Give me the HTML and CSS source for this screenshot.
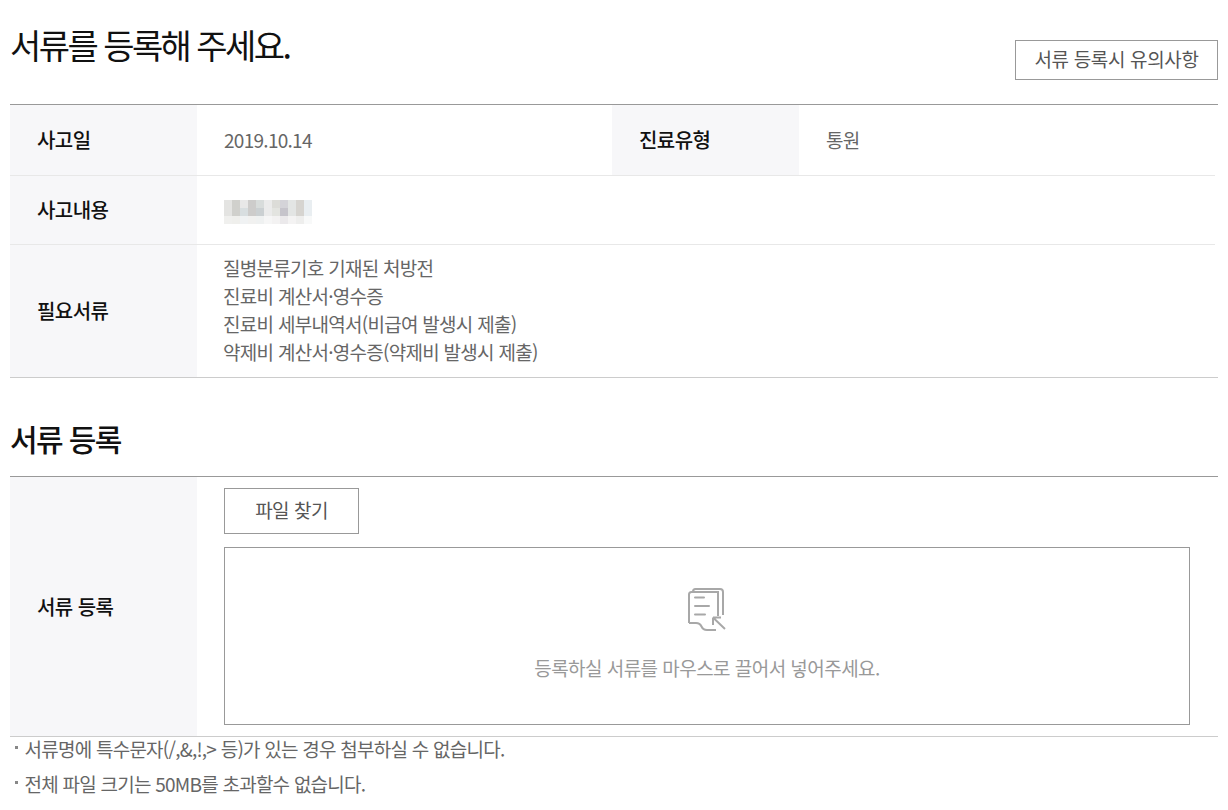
FILE: index.html
```html
<!DOCTYPE html>
<html lang="ko">
<head>
<meta charset="utf-8">
<title>서류 등록</title>
<link rel="stylesheet" href="styles.css">
</head>
<body>
<main class="page">
  <header class="head">
    <h1 class="title">서류를 등록해 주세요.</h1>
    <button class="btn btn-notice" type="button">서류 등록시 유의사항</button>
  </header>
  <section class="info">
    <div class="row row-date">
      <div class="label">사고일</div>
      <div class="value">2019.10.14</div>
      <div class="label">진료유형</div>
      <div class="value">통원</div>
    </div>
    <div class="row row-content">
      <div class="label">사고내용</div>
      <div class="value">
        <svg class="mosaic" width="88" height="24" viewBox="0 0 11 3" shape-rendering="crispEdges" aria-hidden="true">
          <rect x="0" y="0" width="1" height="2" fill="#e4e4e2"/><rect x="1" y="0" width="1" height="2" fill="#d0d0cc"/><rect x="2" y="0" width="1" height="1" fill="#e8e8e8"/><rect x="2" y="1" width="1" height="1" fill="#d8dee0"/><rect x="3" y="0" width="1" height="2" fill="#cdcccb"/><rect x="4" y="0" width="1" height="1" fill="#d8dcdb"/><rect x="4" y="1" width="1" height="1" fill="#cbd0d2"/><rect x="5" y="0" width="1" height="2" fill="#ebebeb"/><rect x="6" y="0" width="1" height="1" fill="#dcdcd8"/><rect x="6" y="1" width="1" height="1" fill="#e3e4e0"/><rect x="7" y="0" width="1" height="1" fill="#d4d3d8"/><rect x="7" y="1" width="1" height="1" fill="#c6c4cb"/><rect x="8" y="0" width="1" height="2" fill="#e3e5e4"/><rect x="9" y="0" width="1" height="2" fill="#d6d4d0"/><rect x="10" y="0" width="1" height="2" fill="#e9eef1"/>
          <rect x="0" y="2" width="1" height="1" fill="#f0f0ee"/><rect x="1" y="2" width="1" height="1" fill="#efefec"/><rect x="2" y="2" width="1" height="1" fill="#f0f2f3"/><rect x="3" y="2" width="1" height="1" fill="#f1f1f0"/><rect x="4" y="2" width="1" height="1" fill="#eff1f1"/><rect x="5" y="2" width="1" height="1" fill="#f6f6f6"/><rect x="6" y="2" width="1" height="1" fill="#f3f2f2"/><rect x="7" y="2" width="1" height="1" fill="#ebe9eb"/><rect x="8" y="2" width="1" height="1" fill="#f4f3f3"/><rect x="9" y="2" width="1" height="1" fill="#eeeeed"/><rect x="10" y="2" width="1" height="1" fill="#f8f9f9"/>
        </svg>
      </div>
    </div>
    <div class="row row-docs">
      <div class="label">필요서류</div>
      <ul class="value docs">
        <li>질병분류기호 기재된 처방전</li>
        <li>진료비 계산서·영수증</li>
        <li>진료비 세부내역서(비급여 발생시 제출)</li>
        <li>약제비 계산서·영수증(약제비 발생시 제출)</li>
      </ul>
    </div>
  </section>
  <h2 class="subtitle">서류 등록</h2>
  <section class="upload">
    <div class="label label-upload">서류 등록</div>
    <div class="upload-body">
      <button class="btn btn-file" type="button">파일 찾기</button>
      <div class="dropzone">
        <svg class="drop-icon" width="40" height="46" viewBox="0 0 40 46" fill="none" stroke="#a8a8a8" stroke-width="2" aria-hidden="true">
          <path d="M2 35V6.5Q2 4 4.500 4H31V28"/>
          <path d="M6 4V3.500Q6 1 8.500 1H33Q36 1 36 4V27"/>
          <path d="M8 9.500H17M8 18H22M8 26.500H18" stroke-linecap="round"/>
          <path d="M2 35H9Q13 35 14.500 38.500Q16 42 20 42H29"/>
          <path d="M26 29.500H34M26 29.500V37M26.500 30L38 41"/>
        </svg>
        <p class="drop-text">등록하실 서류를 마우스로 끌어서 넣어주세요.</p>
      </div>
    </div>
  </section>
  <ul class="notes">
    <li>서류명에 특수문자(/,&amp;,!,&gt; 등)가 있는 경우 첨부하실 수 없습니다.</li>
    <li>전체 파일 크기는 50MB를 초과할수 없습니다.</li>
  </ul>
</main>
</body>
</html>
```
FILE: styles.css
```css
* { box-sizing: border-box; }
html, body { margin: 0; padding: 0; background: #fff; }
body {
  font-family: "Noto Sans CJK KR", "Noto Sans", sans-serif;
  color: #666;
  overflow: hidden;
}
.page { padding: 0 10px; height: 810px; }
.head {
  display: flex;
  justify-content: space-between;
  align-items: flex-end;
  height: 105px;
  border-bottom: 1px solid #999;
  padding-bottom: 24px;
}
.title {
  margin: 0;
  align-self: flex-start;
  padding-top: 20px;
  font-size: 34px;
  line-height: 50px;
  font-weight: 400;
  letter-spacing: -2.55px;
  color: #111;
}
.btn {
  display: block;
  background: #fff;
  border: 1px solid #999;
  font-family: inherit;
  font-size: 19px;
  color: #555;
  padding: 0 0 4px;
}
.btn-notice { width: 203px; height: 40px; letter-spacing: -0.35px; }
.row {
  display: grid;
  grid-template-columns: 187px 415px 187px 1fr;
  margin-right: 3px;
  border-bottom: 1px solid #e8e8e8;
}
.row-date { height: 71px; }
.row-content { height: 69px; }
.row-docs { height: 133px; margin-right: 0; border-bottom-color: #ccc; }
.label {
  display: flex;
  align-items: center;
  padding: 0 0 2px 27px;
  background: #f7f7f9;
  font-size: 20px;
  font-weight: 500;
  letter-spacing: -0.55px;
  color: #111;
}
.label-upload { padding-bottom: 0; }
.value {
  display: flex;
  align-items: center;
  padding: 0 0 2px 27px;
  font-size: 19px;
  letter-spacing: -0.72px;
  color: #666;
}
.mosaic { display: block; margin-top: 6px; }
.row-content .value, .row-docs .value { grid-column: 2 / 5; }
.docs {
  display: block;
  margin: 0;
  padding: 9px 0 0 26px;
  list-style: none;
}
.docs li { height: 28px; line-height: 28px; }
.subtitle {
  margin: 0;
  height: 99px;
  padding-top: 37px;
  border-bottom: 1px solid #999;
  font-size: 30px;
  line-height: 46px;
  font-weight: 500;
  letter-spacing: -1.6px;
  color: #111;
}
.upload {
  display: grid;
  grid-template-columns: 187px 1fr;
  height: 260px;
  border-bottom: 1px solid #ccc;
}
.upload-body { padding: 11px 28px 0 27px; }
.btn-file { width: 135px; height: 46px; letter-spacing: -0.5px; }
.dropzone {
  display: flex;
  flex-direction: column;
  align-items: center;
  height: 178px;
  margin-top: 13px;
  border: 1px solid #999;
  padding-top: 40px;
}
.drop-icon { display: block; }
.drop-text {
  margin: 20px 0 0;
  font-size: 19px;
  line-height: 28px;
  letter-spacing: -0.55px;
  color: #999;
}
.notes {
  margin: 0;
  padding: 0;
  list-style: none;
  font-size: 19px;
  letter-spacing: -0.76px;
  color: #666;
}
.notes li {
  position: relative;
  height: 35px;
  line-height: 24px;
  padding-left: 14.5px;
}
.notes li::before {
  content: "";
  position: absolute;
  left: 5px;
  top: 9px;
  width: 3px;
  height: 3px;
  background: #888;
}
```
